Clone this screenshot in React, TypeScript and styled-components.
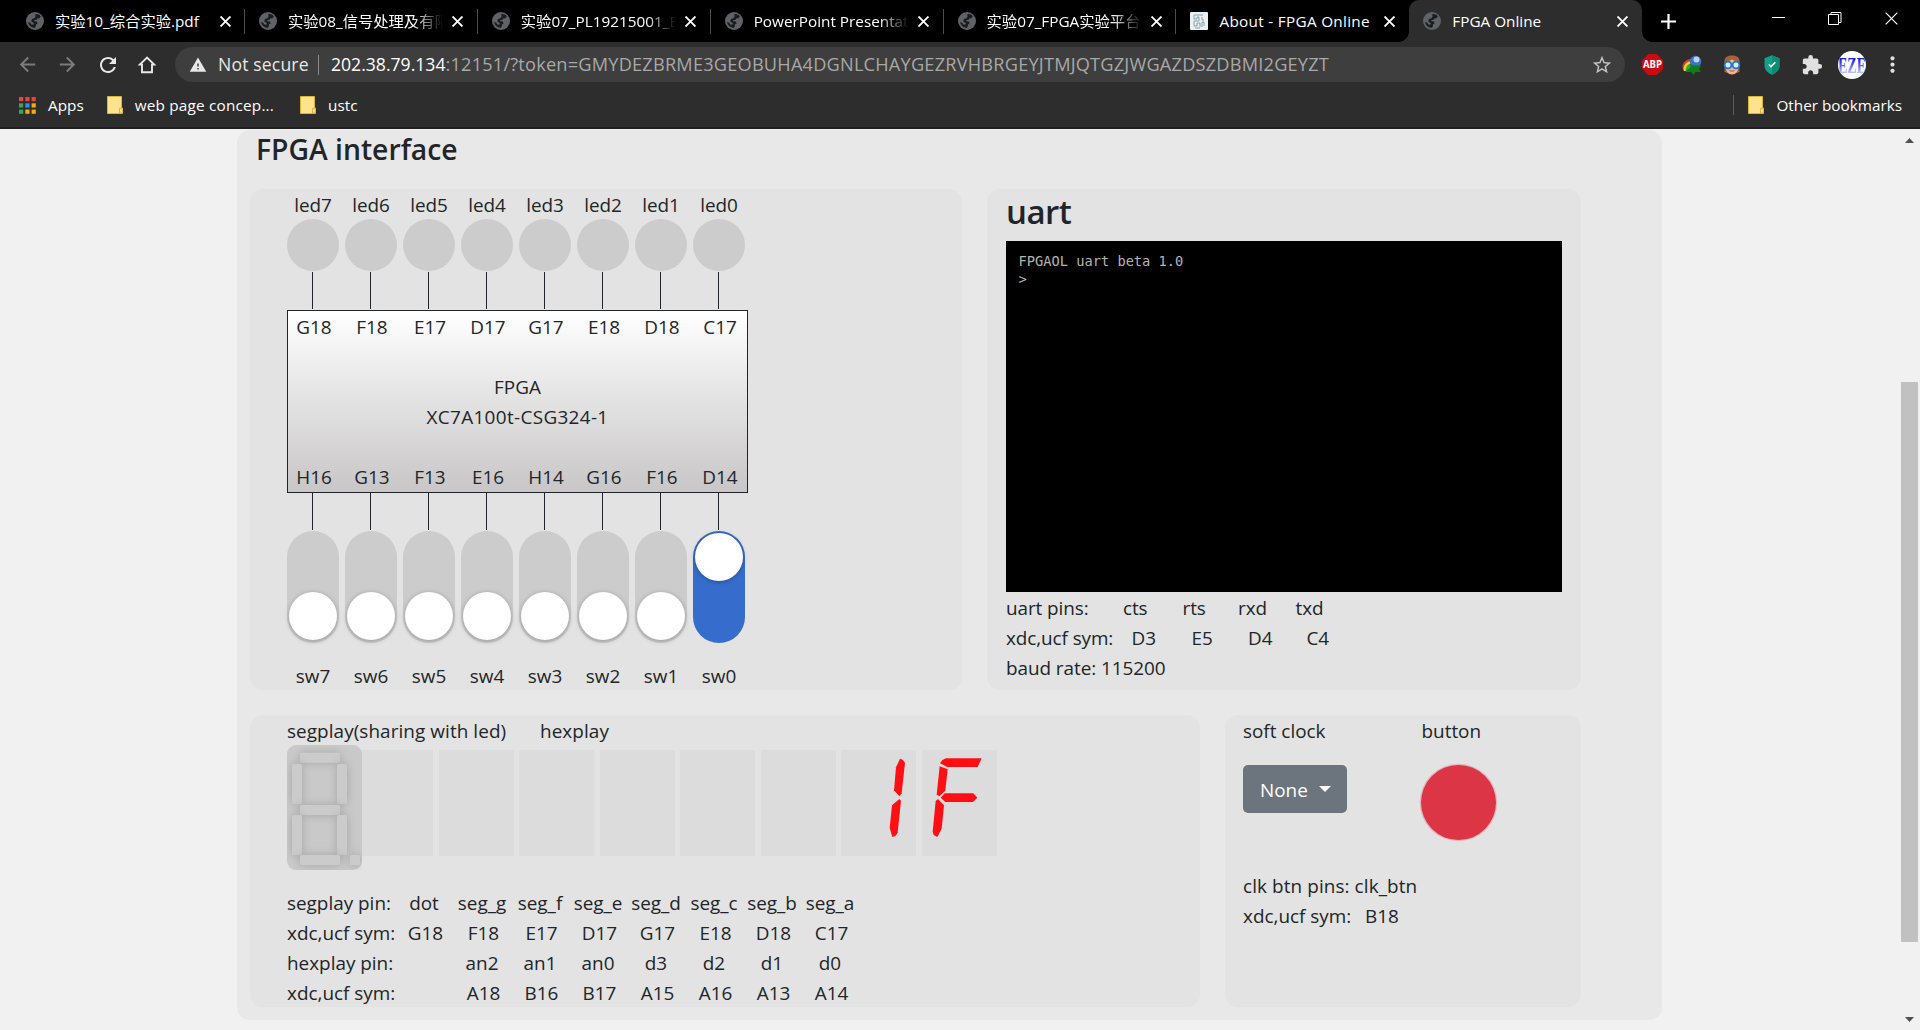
import React from "react";
import styled, { createGlobalStyle } from "styled-components";
import {
  MdArrowBack,
  MdArrowForward,
  MdRefresh,
  MdStarBorder,
  MdExtension,
  MdWarning,
  MdMoreVert,
} from "react-icons/md";

const GlobalStyle = createGlobalStyle`
  * { box-sizing: border-box; }
  body {
    margin: 0;
    overflow: hidden;
    font-family: "Open Sans", "Noto Sans CJK SC", sans-serif;
    color: #212529;
  }
  svg { display: block; flex: none; }
`;

const Window = styled.div`
  width: 1920px;
  height: 1030px;
  display: flex;
  flex-direction: column;
  overflow: hidden;
  background: #f1f1f1;
`;

/* ---------- browser frame ---------- */

const TabStrip = styled.div`
  height: 42px;
  flex: none;
  display: flex;
  align-items: stretch;
  padding-left: 12px;
  background: #000;
  color: #fff;
`;

const TabBox = styled.div<{ $active?: boolean; $line?: boolean }>`
  position: relative;
  width: 232.9px;
  flex: none;
  display: flex;
  align-items: center;
  padding: 0 14px 0 14px;
  border-radius: 10px 10px 0 0;
  background: ${(p) => (p.$active ? "#2d2d2d" : "transparent")};
  ${(p) =>
    p.$line &&
    `&::after {
      content: "";
      position: absolute;
      right: 0;
      top: 9px;
      width: 1px;
      height: 25px;
      background: #4d4d4d;
    }`}
  ${(p) =>
    p.$active &&
    `&::before, &::after {
      content: "";
      position: absolute;
      bottom: 0;
      width: 10px;
      height: 10px;
    }
    &::before { left: -10px; background: radial-gradient(circle at 0 0, transparent 9.5px, #2d2d2d 10px); }
    &::after { right: -10px; background: radial-gradient(circle at 100% 0, transparent 9.5px, #2d2d2d 10px); }`}
`;

const TabTitle = styled.div<{ $fade?: boolean; $loose?: boolean }>`
  width: 155px;
  margin-left: 11px;
  overflow: hidden;
  white-space: nowrap;
  font-size: 15.3px;
  line-height: 24px;
  letter-spacing: ${(p) => (p.$loose ? "0.3px" : "0")};
  ${(p) =>
    p.$fade &&
    `mask-image: linear-gradient(to right, #000 125px, transparent 155px);`}
`;

const TabClose = styled.div`
  margin-left: 9.5px;
`;

const NewTab = styled.div`
  display: flex;
  align-items: center;
  margin-left: 19px;
`;

const WindowButtons = styled.div`
  display: flex;
  align-items: center;
  gap: 43px;
  height: 37px;
  margin-left: auto;
  margin-right: 22.5px;
`;

const Toolbar = styled.div`
  height: 45px;
  flex: none;
  display: flex;
  align-items: center;
  padding-left: 16px;
  background: #2d2d2d;
  color: #e4e4e4;
`;

const NavButton = styled.div<{ $dim?: boolean }>`
  width: 40px;
  flex: none;
  display: flex;
  color: ${(p) => (p.$dim ? "#7c7c7c" : "#e8e8e8")};
`;

const HomeButton = styled(NavButton)`
  padding-left: 2px;
`;

const Omnibox = styled.div`
  width: 1450px;
  height: 35px;
  flex: none;
  margin-left: -1px;
  display: flex;
  align-items: center;
  padding: 0 12px 0 14px;
  border-radius: 18px;
  background: #3e3e3e;
  font-size: 17.6px;
  line-height: 26px;
  white-space: nowrap;
`;

const Security = styled.span`
  width: 100px;
  margin-left: 11px;
  padding-bottom: 2px;
  color: #e8e8e8;
  letter-spacing: 0.15px;
`;

const Rule = styled.span<{ $h: number; $c: string }>`
  width: 1px;
  height: ${(p) => p.$h}px;
  background: ${(p) => p.$c};
`;

const Url = styled.span`
  margin-left: 12px;
  padding-bottom: 2px;
  flex: 1;
  color: #a8a8a8;
  b { font-weight: 400; color: #fff; }
`;

const UrlPath = styled.span`
  font-size: 18.2px;
  letter-spacing: 0.2px;
`;

const Extensions = styled.div`
  display: flex;
  flex: none;
  align-items: center;
  margin-left: 7px;
`;

const Slot = styled.div`
  width: 40px;
  display: flex;
  justify-content: center;
`;

const Bookmarks = styled.div`
  height: 42px;
  flex: none;
  display: flex;
  align-items: center;
  padding: 0 18px 4px 19px;
  background: #2d2d2d;
  border-bottom: 2px solid #1f1f20;
  color: #fff;
  font-size: 15.3px;
  line-height: 22px;
  white-space: nowrap;
`;

const BookmarkItem = styled.div<{ $gap: number; $loose?: boolean }>`
  display: flex;
  align-items: center;
  gap: 12px;
  margin-left: ${(p) => p.$gap}px;
  letter-spacing: ${(p) => (p.$loose ? "0.2px" : "0")};
`;

const Right = styled.div`
  display: flex;
  align-items: center;
  margin-left: auto;
`;

/* ---------- page ---------- */

const Viewport = styled.div`
  flex: 1;
  display: flex;
  justify-content: space-between;
  min-height: 0;
`;

const Card = styled.main`
  width: 1425px;
  height: 890px;
  margin: 1px 0 0 237px;
  padding-left: 13px;
  border-radius: 13px;
  background: #e8e8e8;
`;

const PageTitle = styled.h4`
  height: 59px;
  margin: 0;
  padding-left: 6px;
  font-size: 28.3px;
  font-weight: 600;
  line-height: 38px;
`;

const PanelRow = styled.div<{ $h: number }>`
  display: flex;
  gap: 25px;
  height: ${(p) => p.$h}px;
  margin-bottom: 25px;
`;

const Panel = styled.section<{ $w: number; $pad: number }>`
  width: ${(p) => p.$w}px;
  padding-left: ${(p) => p.$pad}px;
  border-radius: 13px;
  background: #e3e3e3;
`;

const Line = styled.div<{ $track?: number }>`
  display: flex;
  height: 30px;
  padding-top: 2px;
  font-size: 18.9px;
  line-height: 28px;
  white-space: pre;
  letter-spacing: ${(p) => p.$track ?? 0}px;
`;

const Cell = styled.span<{ $w: number; $mid?: boolean }>`
  width: ${(p) => p.$w}px;
  flex: none;
  display: flex;
  justify-content: ${(p) => (p.$mid ? "center" : "flex-start")};
`;

const Eight = styled.div`
  display: grid;
  grid-template-columns: repeat(8, 52px);
  column-gap: 6px;
`;

const PinText = styled(Line)`
  justify-content: center;
`;

const Led = styled.div`
  height: 52px;
  margin-bottom: 1px;
  border-radius: 50%;
  background: #ccc;
`;

const Wire = styled.div`
  width: 1px;
  height: 37px;
  margin: 0 0 1px 25px;
  background: #212529;
`;

const Chip = styled.div`
  width: 461px;
  height: 183px;
  display: flex;
  flex-direction: column;
  justify-content: space-between;
  padding-bottom: 1px;
  border: 1px solid #212529;
  background: linear-gradient(#fff, #c8c6c6);
`;

const Toggle = styled.div<{ $on?: boolean }>`
  height: 112px;
  margin-bottom: 17px;
  padding: 2px 2px 3px;
  display: flex;
  align-items: ${(p) => (p.$on ? "flex-start" : "flex-end")};
  border-radius: 26px;
  background: ${(p) => (p.$on ? "#366dcc" : "#ccc")};
`;

const Knob = styled.div`
  width: 48px;
  height: 48px;
  border-radius: 50%;
  background: #fff;
  box-shadow: 0 1px 5px rgba(0, 0, 0, 0.28);
`;

const UartTitle = styled.h2`
  height: 52px;
  margin: 0;
  font-size: 33px;
  font-weight: 600;
  line-height: 45px;
  letter-spacing: -0.5px;
`;

const Terminal = styled.div`
  width: 556px;
  height: 351px;
  padding: 11px 0 0 12.5px;
  background: #000;
  color: #b4b4b4;
  font-family: "DejaVu Sans Mono", monospace;
  font-size: 13.7px;
  line-height: 18px;
`;

const Displays = styled.div`
  display: flex;
  height: 142px;
`;

const SegBox = styled.div`
  position: relative;
  z-index: 1;
  width: 75px;
  height: 125px;
  border-radius: 9px;
  background: #c9c9c9;
  rect { fill: #cbcbcb; filter: drop-shadow(0 0 4px rgba(0, 0, 0, 0.18)); }
`;

const HexRow = styled.div`
  display: flex;
  gap: 5.5px;
  margin: 5px 0 0 -4px;
`;

const HexCell = styled.div`
  width: 75px;
  height: 106px;
  background: #dcdcdc;
`;

const Controls = styled.div`
  display: flex;
  height: 125px;
  padding-top: 20px;
`;

const Dropdown = styled.div`
  width: 104px;
  height: 48px;
  margin-right: 74px;
  display: flex;
  align-items: center;
  padding: 1px 0 0 17px;
  border-radius: 5px;
  background: #6c757d;
  color: #fff;
  font-size: 18.9px;
`;

const Caret = styled.span`
  margin: 0 0 1px 11px;
  border: 6px solid transparent;
  border-top-color: #fff;
  border-bottom: 0;
`;

const PushButton = styled.div`
  width: 75px;
  height: 75px;
  border-radius: 50%;
  background: #dc3545;
  box-shadow: 0 0 0 1.25px rgba(220, 53, 69, 0.25);
`;

const Scrollbar = styled.div`
  width: 21px;
  display: flex;
  flex-direction: column;
  align-items: center;
  padding: 9px 0 8px;
  background: #f1f1f1;
`;

const Thumb = styled.div`
  width: 17px;
  height: 560px;
  margin: 239px 0 auto;
  background: #c1c1c1;
`;

/* ---------- drawings ---------- */

const Globe = () => (
  <svg width="18" height="18" viewBox="0 0 18 18">
    <circle cx="9" cy="9" r="9" fill="#5f6368" />
    <path
      d="M9.2 2.1 C11.5 1.8 13.6 2.6 14.8 4.4 L13.2 6.4 L11.4 6.2 L10.7 7.8 L8.4 8.1 L8.2 9.3 L10.9 9.5 L11.6 11.6 L10 12.6 L9.6 14.9 L8.4 15.9 C5.2 15.6 2.6 13.3 2.1 10.1 L4.2 10.8 L5.4 12.4 L7.4 12.8 L7.9 11.2 L5.3 9.4 L5.9 6.9 L8.4 6.3 L9.6 4.6 Z"
      fill="#1b1c1e"
    />
  </svg>
);

const BoardIcon = () => (
  <svg width="18" height="18" viewBox="0 0 18 18">
    <rect width="18" height="18" rx="1" fill="#e9f1f3" />
    <path
      d="M4 3h9M4 3v4h3V5h2v4H4v5h3v-3h3v4M12 5v3h2M12 15v-5h2v4M5 16h5"
      fill="none"
      stroke="#7d9aa4"
      strokeWidth="0.9"
    />
  </svg>
);

const Cross = ({ size, weight }: { size: number; weight: number }) => (
  <svg width={size} height={size} viewBox="0 0 10 10">
    <path d="M.5.5l9 9M9.5.5l-9 9" stroke="#fff" strokeWidth={weight} />
  </svg>
);

const Home = () => (
  <svg width="18" height="18" viewBox="0 0 18 18">
    <path
      d="M9 1.6L1.8 8.6H4V16.2H14V8.6H16.2Z"
      fill="none"
      stroke="currentColor"
      strokeWidth="1.9"
    />
  </svg>
);

const AppsGrid = () => {
  const colors = ["#e8453c", "#e8453c", "#e8453c", "#34a853", "#2f8df5", "#f9ab00", "#34a853", "#f9ab00", "#f9ab00"];
  return (
    <svg width="17" height="17" viewBox="0 0 17 17">
      {colors.map((c, i) => (
        <rect key={i} x={(i % 3) * 6.3} y={Math.floor(i / 3) * 6.3} width="4.2" height="4.2" fill={c} />
      ))}
    </svg>
  );
};

const Folder = () => (
  <svg width="16" height="18" viewBox="0 0 16 18">
    <path d="M.5.5h14v11.5h1V17.5H.5Z" fill="#ffe38c" stroke="#dcb43c" strokeWidth="1" />
    <path d="M12.5 17V12.3h2.8V17Z" fill="#ffe38c" stroke="#dcb43c" strokeWidth="1" />
  </svg>
);

const Blocker = () => (
  <svg width="21" height="21" viewBox="0 0 21 21">
    <path d="M6.2 0h8.6L21 6.2v8.6L14.8 21H6.2L0 14.8V6.2Z" fill="#c70d12" />
    <text
      x="10.5"
      y="14.4"
      textAnchor="middle"
      fontFamily="Open Sans"
      fontWeight="700"
      fontSize="10.8"
      fill="#fff"
      textLength="19"
      lengthAdjust="spacingAndGlyphs"
    >
      ABP
    </text>
  </svg>
);

const Downloader = () => (
  <svg width="20" height="20" viewBox="0 0 20 20">
    <path d="M1.5 15.5C-1.5 10 2.5 4.5 9 4V7C5 8 3 11 4 15Z" fill="#d8402c" />
    <path d="M2 16C.5 11 4 6.5 10 6V9C6 9 4 12 5 16Z" fill="#f3d224" />
    <path d="M4 16.5C3 12 6 8.5 10 8.5V12C8 12 7 14 7.5 17Z" fill="#2fa84a" />
    <circle cx="13.5" cy="6.5" r="5.8" fill="#3f73c0" />
    <circle cx="14.5" cy="4.5" r="3" fill="#b7d3f3" />
    <path d="M8 9L12 10.5L19.500 10.5L17 14L19 17L13.500 17L11.500 20L9 17L3.500 16L8.500 13Z" fill="#0f7d18" />
  </svg>
);

const Face = () => (
  <svg width="18" height="20" viewBox="0 0 18 20">
    <path d="M1.5 17V6C1.5 2 5 .5 9 .5s7.5 1.5 7.5 5.5v11l-3 1h-9Z" fill="#a5623c" />
    <path d="M3 7.5L9 4.5l6 3V13c0 3-2 6.5-6 6.5S3 16 3 13Z" fill="#f0b491" />
    <path d="M6.5 15.5q2.5 1.5 5 0" stroke="#b5543f" fill="none" />
    <circle cx="5" cy="10" r="3.4" fill="#d7ecff" stroke="#1b78d0" strokeWidth="1.8" />
    <circle cx="13" cy="10" r="3.4" fill="#d7ecff" stroke="#1b78d0" strokeWidth="1.8" />
  </svg>
);

const Shield = () => (
  <svg width="16" height="20" viewBox="0 0 16 20">
    <path d="M8 .3L15.5 3.2V11c0 4-3.5 7-7.5 8.7C4 18 .5 15 .5 11V3.2Z" fill="#12a086" />
    <path d="M8 .3L15.5 3.2V11c0 4-3.5 7-7.5 8.7Z" fill="#0e8c76" />
    <path d="M4.8 9.5L7 11.7L11.3 7.3" fill="none" stroke="#fff" strokeWidth="1.6" />
  </svg>
);

const Avatar = () => (
  <svg width="28" height="28" viewBox="0 0 28 28">
    <defs>
      <linearGradient id="ink" x1="0" y1="0" x2="0" y2="1">
        <stop offset="0.3" stopColor="#1a1fe0" />
        <stop offset="0.9" stopColor="#d4d7ff" />
      </linearGradient>
      <clipPath id="disc">
        <circle cx="14" cy="14" r="14" />
      </clipPath>
    </defs>
    <circle cx="14" cy="14" r="14" fill="#fff" />
    <text
      x="14"
      y="21.5"
      clipPath="url(#disc)"
      textAnchor="middle"
      fontFamily="Liberation Serif"
      fontWeight="700"
      fontSize="23"
      fill="url(#ink)"
      textLength="28"
      lengthAdjust="spacingAndGlyphs"
    >
      EZE
    </text>
  </svg>
);

const Arrow = ({ down }: { down?: boolean }) => (
  <svg width="9" height="5" viewBox="0 0 9 5">
    <path d={down ? "M0 0h9L4.5 5Z" : "M0 5h9L4.5 0Z"} fill="#505050" />
  </svg>
);

/* Shapes of the lit bars of a slanted display cell, 3 units per pixel. */
const BARS: Record<string, string> = {
  a: "54,40 61,30 72,25 179,25 167,51 76,51",
  b: "177,26 185,29 192,38 182,130 175,139 159,121 165,52",
  c: "175,147 180,152 170,248 163,258 154,261 146,234 153,166",
  d: "36,264 60,242 126,242 142,264 132,269 46,269",
  e: "48,147 66,166 59,236 46,261 35,255 32,245 41,153",
  f: "53,49 77,58 70,122 52,139 44,134",
  g: "56,143 68,130 154,130 166,143 153,156 70,156",
};
const LIT: Record<string, string> = { " ": "", "1": "bc", F: "aefg" };

const HexDigit = ({ value }: { value: string }) => (
  <HexCell>
    <svg width="75" height="106" viewBox="0 0 225 318">
      {LIT[value].split("").map((bar) => (
        <polygon key={bar} points={BARS[bar]} fill="#ff0f14" />
      ))}
    </svg>
  </HexCell>
);

const SegDisplay = () => (
  <SegBox>
    <svg width="75" height="125" viewBox="0 0 75 125">
      <rect x="13" y="7.7" width="40" height="10" rx="1.5" />
      <rect x="5" y="19" width="10" height="40" rx="1.5" />
      <rect x="50" y="19" width="10" height="40" rx="1.5" />
      <rect x="13" y="60" width="40" height="10" rx="1.5" />
      <rect x="5" y="70" width="10" height="40" rx="1.5" />
      <rect x="50" y="70" width="10" height="40" rx="1.5" />
      <rect x="13" y="110" width="40" height="10" rx="1.5" />
      <rect x="63" y="110" width="10" height="10" rx="1.5" />
    </svg>
  </SegBox>
);

/* ---------- data ---------- */

const TABS = [
  { title: "实验10_综合实验.pdf" },
  { title: "实验08_信号处理及有限", fade: true },
  { title: "实验07_PL19215001_E", fade: true },
  { title: "PowerPoint Presentation", fade: true },
  { title: "实验07_FPGA实验平台", fade: true },
  { title: "About - FPGA Online", board: true },
  { title: "FPGA Online", active: true },
];

const LED_PINS = ["G18", "F18", "E17", "D17", "G17", "E18", "D18", "C17"];
const SW_PINS = ["H16", "G13", "F13", "E16", "H14", "G16", "F16", "D14"];

const PIN_TABLE = [
  { label: "segplay pin:", cells: ["dot", "seg_g", "seg_f", "seg_e", "seg_d", "seg_c", "seg_b", "seg_a"], shift: 0 },
  { label: "xdc,ucf sym:", cells: ["G18", "F18", "E17", "D17", "G17", "E18", "D18", "C17"], shift: 1.5 },
  { label: "hexplay pin:", cells: ["", "an2", "an1", "an0", "d3", "d2", "d1", "d0"], shift: 0 },
  { label: "xdc,ucf sym:", cells: ["", "A18", "B16", "B17", "A15", "A16", "A13", "A14"], shift: 1.5 },
];

const UART_TABLE = [
  { label: "uart pins:", lead: 117, cells: [["cts", 59.5], ["rts", 55.5], ["rxd", 57.5], ["txd", 40]] },
  { label: "xdc,ucf sym:", lead: 125.5, cells: [["D3", 60], ["E5", 56.5], ["D4", 58.5], ["C4", 40]] },
] as { label: string; lead: number; cells: [string, number][] }[];

export default function App() {
  return (
    <Window>
      <GlobalStyle />
      <TabStrip>
        {TABS.map((tab, i) => (
          <TabBox key={i} $active={tab.active} $line={i < 5}>
            {tab.board ? <BoardIcon /> : <Globe />}
            <TabTitle $fade={tab.fade} $loose={tab.board}>{tab.title}</TabTitle>
            <TabClose>
              <Cross size={11} weight={1.7} />
            </TabClose>
          </TabBox>
        ))}
        <NewTab>
          <svg width="15" height="15" viewBox="0 0 15 15">
            <path d="M7.5 0v15M0 7.5h15" stroke="#fff" strokeWidth="2.2" />
          </svg>
        </NewTab>
        <WindowButtons>
          <svg width="13" height="13" viewBox="0 0 13 13">
            <path d="M0 5.5h13" stroke="#fff" />
          </svg>
          <svg width="14" height="13" viewBox="0 0 14 13">
            <path d="M.5 2.5h10v10h-10ZM3 2.5V.5h10v10h-2.5" fill="none" stroke="#fff" />
          </svg>
          <Cross size={13} weight={0.9} />
        </WindowButtons>
      </TabStrip>

      <Toolbar>
        <NavButton $dim><MdArrowBack size={23} /></NavButton>
        <NavButton $dim><MdArrowForward size={23} /></NavButton>
        <NavButton><MdRefresh size={24} /></NavButton>
        <HomeButton><Home /></HomeButton>
        <Omnibox>
          <MdWarning size={18} color="#e8e8e8" />
          <Security>Not secure</Security>
          <Rule $h={20} $c="#8a8a8a" />
          <Url>
            <b>202.38.79.134</b>
            <UrlPath>:12151/?token=GMYDEZBRME3GEOBUHA4DGNLCHAYGEZRVHBRGEYJTMJQTGZJWGAZDSZDBMI2GEYZT</UrlPath>
          </Url>
          <MdStarBorder size={22} color="#c4c4c4" />
        </Omnibox>
        <Extensions>
          <Slot><Blocker /></Slot>
          <Slot><Downloader /></Slot>
          <Slot><Face /></Slot>
          <Slot><Shield /></Slot>
          <Slot><MdExtension size={22} color="#e0e0e0" /></Slot>
          <Slot><Avatar /></Slot>
          <Slot><MdMoreVert size={25} color="#e0e0e0" /></Slot>
        </Extensions>
      </Toolbar>

      <Bookmarks>
        <BookmarkItem $gap={0}><AppsGrid />Apps</BookmarkItem>
        <BookmarkItem $gap={23} $loose><Folder />web page concep...</BookmarkItem>
        <BookmarkItem $gap={26}><Folder />ustc</BookmarkItem>
        <Right>
          <Rule $h={20} $c="#5c5c5c" />
          <BookmarkItem $gap={14}><Folder />Other bookmarks</BookmarkItem>
        </Right>
      </Bookmarks>

      <Viewport>
        <Card>
          <PageTitle>FPGA interface</PageTitle>

          <PanelRow $h={501}>
            <Panel $w={712} $pad={37}>
              <Eight>
                {LED_PINS.map((_, i) => (
                  <div key={i}>
                    <PinText>{`led${7 - i}`}</PinText>
                    <Led />
                    <Wire />
                  </div>
                ))}
              </Eight>
              <Chip>
                <Eight>{LED_PINS.map((p) => <PinText key={p}>{p}</PinText>)}</Eight>
                <div>
                  <PinText>FPGA</PinText>
                  <PinText $track={0.35}>XC7A100t-CSG324-1</PinText>
                </div>
                <Eight>{SW_PINS.map((p) => <PinText key={p}>{p}</PinText>)}</Eight>
              </Chip>
              <Eight>
                {SW_PINS.map((_, i) => (
                  <div key={i}>
                    <Wire />
                    <Toggle $on={i === 7}><Knob /></Toggle>
                    <PinText>{`sw${7 - i}`}</PinText>
                  </div>
                ))}
              </Eight>
            </Panel>

            <Panel $w={594} $pad={19}>
              <UartTitle>uart</UartTitle>
              <Terminal>
                <div>FPGAOL uart beta 1.0</div>
                <div>&gt;</div>
              </Terminal>
              {UART_TABLE.map((row) => (
                <Line key={row.label} $track={-0.08}>
                  <Cell $w={row.lead}>{row.label}</Cell>
                  {row.cells.map(([text, w]) => <Cell key={text} $w={w}>{text}</Cell>)}
                </Line>
              ))}
              <Line $track={-0.05}>baud rate: 115200</Line>
            </Panel>
          </PanelRow>

          <PanelRow $h={292}>
            <Panel $w={950} $pad={37}>
              <Line $track={0.08}>
                <Cell $w={253}>segplay(sharing with led)</Cell>
                <Cell $w={80}>hexplay</Cell>
              </Line>
              <Displays>
                <SegDisplay />
                <HexRow>
                  {"      1F".split("").map((d, i) => <HexDigit key={i} value={d} />)}
                </HexRow>
              </Displays>
              {PIN_TABLE.map((row, r) => (
                <Line key={r}>
                  <Cell $w={108 + row.shift}>{row.label}</Cell>
                  {row.cells.map((c, i) => <Cell key={i} $w={58} $mid>{c}</Cell>)}
                </Line>
              ))}
            </Panel>

            <Panel $w={356} $pad={18}>
              <Line>
                <Cell $w={178.5}>soft clock</Cell>
                <Cell $w={80}>button</Cell>
              </Line>
              <Controls>
                <Dropdown>None<Caret /></Dropdown>
                <PushButton />
              </Controls>
              <Line $track={0.1}>clk btn pins: clk_btn</Line>
              <Line>
                <Cell $w={122}>xdc,ucf sym:</Cell>
                <Cell $w={60}>B18</Cell>
              </Line>
            </Panel>
          </PanelRow>
        </Card>
        <Scrollbar>
          <Arrow />
          <Thumb />
          <Arrow down />
        </Scrollbar>
      </Viewport>
    </Window>
  );
}
